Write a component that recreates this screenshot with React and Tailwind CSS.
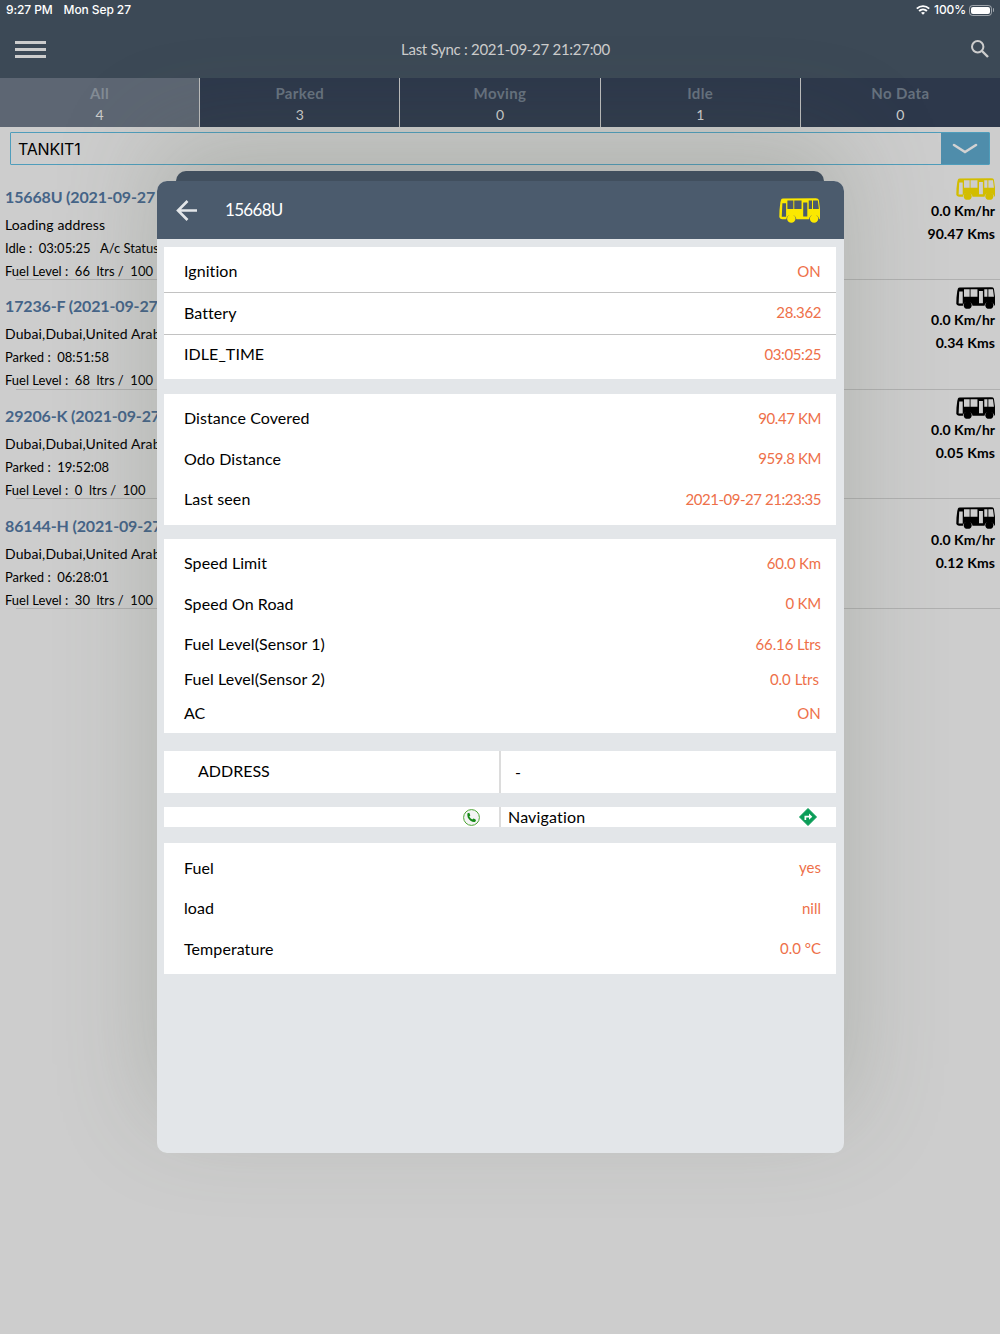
import { Fragment } from "react";

const TABS = [
  { label: "All", count: 4 },
  { label: "Parked", count: 3 },
  { label: "Moving", count: 0 },
  { label: "Idle", count: 1 },
  { label: "No Data", count: 0 },
];

const VEHICLES = [
  { title: "15668U (2021-09-27", address: "Loading address", status: "Idle :  03:05:25   A/c Status", fuel: "Fuel Level :  66  ltrs /  100", km: "90.47 Kms", idle: true },
  { title: "17236-F (2021-09-27", address: "Dubai,Dubai,United Arab", status: "Parked :  08:51:58", fuel: "Fuel Level :  68  ltrs /  100", km: "0.34 Kms" },
  { title: "29206-K (2021-09-27", address: "Dubai,Dubai,United Arab", status: "Parked :  19:52:08", fuel: "Fuel Level :  0  ltrs /  100", km: "0.05 Kms" },
  { title: "86144-H (2021-09-27", address: "Dubai,Dubai,United Arab", status: "Parked :  06:28:01", fuel: "Fuel Level :  30  ltrs /  100", km: "0.12 Kms" },
];

function Bus({ className }) {
  return (
    <svg className={className} viewBox="0 0 40 25" preserveAspectRatio="none" fill="currentColor">
      <path
        fillRule="evenodd"
        d="M2 1.800Q2.400 .5 4 .5L36 .3Q38.500 .3 38.900 2L40 11V20Q40 21.200 39.150 21.200A5 5 0 0 0 29.250 21.200H16.950A5 5 0 0 0 7.050 21.200H3Q.5 21 .3 19L.5 12 1.300 4.500ZM3.300 5.200 2.700 18.800H6.900V5.200ZM8.200 2.600V11H14V2.600ZM14.900 2.600V11H22V2.600ZM23.600 4.600V18.600H27.600V4.600ZM29 2.600V11H32.200V2.600ZM33.200 2.600V11H38.900L37.900 2.600Z"
      />
      <circle cx="12" cy="20.700" r="4.100" />
      <circle cx="34.200" cy="20.700" r="4.100" />
    </svg>
  );
}

function StatusBar() {
  return (
    <div className="flex h-5 items-center justify-between pr-[6px] pl-1.5 font-['Inter'] text-[12px] font-medium text-white">
      <div className="flex gap-[11px] tracking-[-0.1px]">
        <span>9:27 PM</span>
        <span>Mon Sep 27</span>
      </div>
      <div className="flex items-center">
        <svg className="mr-1 h-[10px] w-[14px]" viewBox="0 0 14 10" fill="none" stroke="white" strokeWidth="1.900">
          <path d="M.8 3.600a9 9 0 0 1 12.400 0M3.100 6a5.700 5.700 0 0 1 7.800 0" />
          <path d="M7 9.800 5 7.800a3 3 0 0 1 4 0Z" fill="white" stroke="none" />
        </svg>
        <span className="tracking-[-0.1px]">100%</span>
        <div className="ml-[3px] h-[11px] w-[23px] rounded-[3.5px] border border-white/50 p-px">
          <div className="h-full w-full rounded-[2px] bg-white" />
        </div>
        <div className="ml-px h-1 w-px rounded-r bg-white/50" />
      </div>
    </div>
  );
}

function VehicleRow({ vehicle }) {
  return (
    <div className="relative flex h-[109.800px] justify-between px-[5px] text-black">
      <div className="whitespace-pre">
        <p className="mt-[13.500px] h-[27px] text-[16px] leading-[26px] font-bold tracking-[-0.15px] text-[#456488]">{vehicle.title}</p>
        <p className="h-[28px] text-[14px] leading-[28px] tracking-[0.120px]">{vehicle.address}</p>
        <p className="h-[18px] text-[13px] leading-[18px] tracking-[-0.010px]">{vehicle.status}</p>
        <p className="mt-[5px] h-[18px] text-[13px] leading-[18px] tracking-[-0.010px]">{vehicle.fuel}</p>
      </div>
      <div className="flex flex-col items-end text-[14px] leading-[23px] font-bold">
        <Bus className={vehicle.idle ? "mt-[7.500px] h-[22px] w-[39px] text-[#d2bd00]" : "mt-[7.500px] h-[22px] w-[39px] text-black"} />
        <span className="-mt-px">0.0 Km/hr</span>
        <span className="tracking-[0.1px]">{vehicle.km}</span>
      </div>
      <div className="absolute right-0 bottom-0 left-4 h-px bg-[#b0b0b0]" />
    </div>
  );
}

function Row({ label, value, className = "h-[40.500px] pb-[1.500px]", valueClass = "tracking-[-0.4px]" }) {
  return (
    <div className={`flex items-center justify-between pr-[15px] pl-5 ${className}`}>
      <span className="text-[16px] tracking-[0.080px] text-black">{label}</span>
      <span className={`text-[15px] text-[#ee7049] ${valueClass}`}>{value}</span>
    </div>
  );
}

function DetailModal() {
  return (
    <div className="absolute inset-0 flex flex-col items-center pt-[171px]">
      <div className="z-10 h-[10px] w-[648px] rounded-t-[10px] bg-[#414f5e]" />
      <div className="relative h-[971.500px] w-[687px] overflow-hidden rounded-[10px] bg-[#e3e6e9] shadow-[0_-40px_100px_rgba(90,102,82,0.260)]">
        <div className="flex h-[58px] items-center bg-[#4b5b6d] pr-6 pl-[19.500px] text-white">
          <svg className="h-[21px] w-[21px] text-[#e3e6e9]" viewBox="0 0 21 21" fill="none" stroke="currentColor" strokeWidth="2.600">
            <path d="M21 10.500H2M11.500 1 2 10.500l9.500 9.500" />
          </svg>
          <span className="ml-7 text-[17px] tracking-[-0.700px]">15668U</span>
          <Bus className="ml-auto h-[25px] w-[41px] text-[#fbe800]" />
        </div>

        <div className="px-[7.500px] pt-2">
          <div className="h-[132px] bg-white">
            <Row label="Ignition" value="ON" className="h-[45px] pt-[3.500px]" valueClass="tracking-[0.2px]" />
            <div className="h-px bg-[#c2c2c2]" />
            <Row label="Battery" value="28.362" />
            <div className="h-px bg-[#c2c2c2]" />
            <Row label="IDLE_TIME" value="03:05:25" />
          </div>

          <div className="mt-[14.500px] h-[131px] bg-white pt-[5px]">
            <Row label="Distance Covered" value="90.47 KM" />
            <Row label="Odo Distance" value="959.8 KM" />
            <Row label="Last seen" value="2021-09-27 21:23:35" valueClass="tracking-[-0.460px]" />
          </div>

          <div className="mt-[14.500px] h-[194px] bg-white pt-[4.500px]">
            <Row label="Speed Limit" value="60.0 Km" valueClass="tracking-[-0.2px]" />
            <Row label="Speed On Road" value="0 KM" valueClass="tracking-[-0.2px]" />
            <Row label="Fuel Level(Sensor 1)" value="66.16 Ltrs" valueClass="tracking-[-0.1px]" />
            <Row label="Fuel Level(Sensor 2)" value="0.0 Ltrs" className="-mt-[3px] h-[34.500px] pb-px" valueClass="mr-0.5" />
            <Row label="AC" value="ON" className="h-[34.500px] pb-px" valueClass="tracking-[0.2px]" />
          </div>

          <div className="mt-[18px] grid h-[41.500px] grid-cols-2 items-center bg-white text-[16px] text-black">
            <span className="pb-px pl-[34px]">ADDRESS</span>
            <span className="-ml-px flex h-full items-center border-l-2 border-[#dcdcdc] pl-[14px]">-</span>
          </div>

          <div className="mt-[14.500px] grid h-5 grid-cols-2 bg-white text-[16px] leading-5 text-black">
            <div className="flex items-center justify-end pr-5">
              <svg className="h-[17px] w-[17px]" viewBox="0 0 17 17">
                <circle cx="8.500" cy="8.500" r="7.900" fill="#f4f4f4" stroke="#4ca535" />
                <path fill="#168a18" d="M4.500 4.300 6.200 3.800Q7.100 5.200 7.300 6.500L6.300 7.500Q7.200 9.500 9.300 10.600L10.400 9.600Q11.800 9.900 13 11L12.300 12.800Q10.500 13.700 7.500 11.700 3.400 8.500 4.500 4.300Z" />
              </svg>
            </div>
            <div className="-ml-px flex h-5 items-center justify-between border-l-2 border-[#dcdcdc] pr-[19px] pl-[7px]">
              <span className="-mt-px tracking-[0.180px]">Navigation</span>
              <svg className="h-[18px] w-[18px]" viewBox="0 0 18 18">
                <path fill="#0b9d58" stroke="#0b9d58" strokeLinejoin="round" d="M9 .5 17.500 9 9 17.500.5 9Z" />
                <path fill="white" d="M5.500 12V7.800H10V5.500L13.300 8.700 10 11.800V9.500H7.200V12Z" />
              </svg>
            </div>
          </div>

          <div className="mt-4 h-[131px] bg-white pt-[5px]">
            <Row label="Fuel" value="yes" valueClass="tracking-normal" />
            <Row label="load" value="nill" valueClass="tracking-normal" />
            <Row label="Temperature" value="0.0 °C" valueClass="tracking-normal" />
          </div>
        </div>
      </div>
    </div>
  );
}

export default function App() {
  return (
    <div className="relative h-[1334px] w-[1000px] overflow-hidden bg-[#cdcdcd] font-['Lato','Liberation_Sans',sans-serif]">
      <div className="h-[78px] bg-[#3c4956]">
        <StatusBar />
        <div className="flex h-[58px] items-center justify-between pr-[11px] pl-[15px] text-[#cdcdcd]">
          <div className="flex w-[31px] flex-col gap-1">
            {[0, 1, 2].map((i) => (
              <span key={i} className="h-[3px] bg-[#cdcdcd]" />
            ))}
          </div>
          <span className="mr-[6px] text-[15px] tracking-[-0.280px]">Last Sync : 2021-09-27 21:27:00</span>
          <svg className="h-[18px] w-[18px]" viewBox="0 0 18 18" fill="none" stroke="currentColor" strokeWidth="2">
            <circle cx="6.700" cy="6.700" r="5.700" />
            <path strokeWidth="2.400" d="m11 11 6 6" />
          </svg>
        </div>
      </div>

      {/* Status filter tabs */}
      <div className="flex h-[49px] bg-[#2d384b]">
        {TABS.map(({ label, count }, i) => (
          <Fragment key={label}>
            {i > 0 && <div className="w-px bg-[#bdbdbd]" />}
            <div className={`flex flex-1 flex-col items-center pt-1 leading-[22px] ${i === 0 ? "bg-[#5d6673] text-[#838c95]" : "text-[#66717e]"}`}>
              <span className="text-[15px] font-bold tracking-[0.4px]">{label}</span>
              <span className="text-[14px] text-[#cdcdcd]">{count}</span>
            </div>
          </Fragment>
        ))}
      </div>

      {/* Group picker */}
      <div className="mx-[10px] mt-[5px] flex h-[33px] rounded-[1px] border border-[#4f9dbb]">
        <span className="flex flex-1 items-center pl-[7px] font-['Inter'] text-[16px] tracking-[-0.2px] text-black">TANKIT1</span>
        <div className="flex w-12 items-center justify-center bg-[#4f8dab]">
          <svg className="h-[11px] w-[26px]" viewBox="0 0 26 11" fill="none" stroke="#d2d2d2" strokeWidth="2.600" strokeLinecap="round">
            <path d="m2 2 11 7 11-7" />
          </svg>
        </div>
      </div>

      <div className="mt-[5px]">
        {VEHICLES.map((vehicle) => (
          <VehicleRow key={vehicle.title} vehicle={vehicle} />
        ))}
      </div>

      <DetailModal />
    </div>
  );
}
